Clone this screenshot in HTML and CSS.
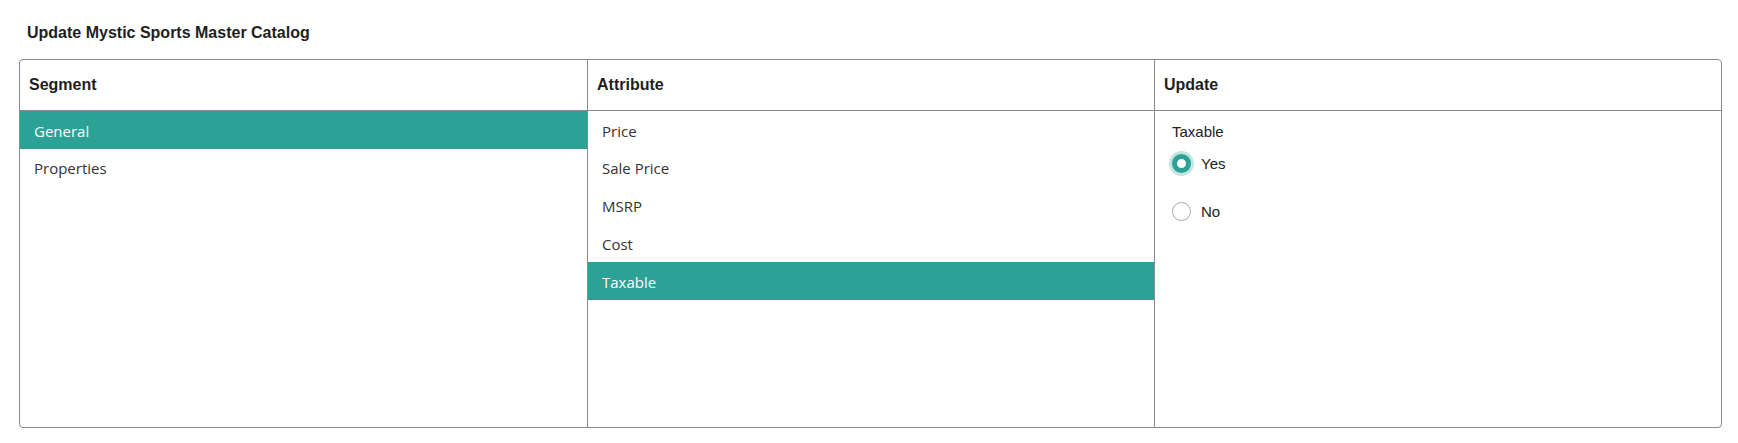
FILE: index.html
```html
<!DOCTYPE html>
<html lang="en">
<head>
<meta charset="utf-8">
<title>Update Mystic Sports Master Catalog</title>
<link rel="stylesheet" href="styles.css">
</head>
<body>
<div class="page">
  <h1 class="title">Update Mystic Sports Master Catalog</h1>
  <div class="panel">
    <section class="col">
      <div class="col-head">Segment</div>
      <ul class="list">
        <li class="item selected">General</li>
        <li class="item">Properties</li>
      </ul>
    </section>
    <section class="col">
      <div class="col-head">Attribute</div>
      <ul class="list">
        <li class="item">Price</li>
        <li class="item">Sale Price</li>
        <li class="item">MSRP</li>
        <li class="item">Cost</li>
        <li class="item selected">Taxable</li>
      </ul>
    </section>
    <section class="col">
      <div class="col-head">Update</div>
      <div class="update">
        <div class="field-label">Taxable</div>
        <label class="option">
          <input class="radio" type="radio" name="taxable" checked>
          <span>Yes</span>
        </label>
        <label class="option">
          <input class="radio" type="radio" name="taxable">
          <span>No</span>
        </label>
      </div>
    </section>
  </div>
</div>
</body>
</html>
```
FILE: styles.css
```css
html, body {
  margin: 0;
  padding: 0;
  background: #ffffff;
}

.page {
  padding: 24px 16px 0 19px;
  font-family: "Liberation Sans", Arial, sans-serif;
  color: #222222;
}

.title {
  margin: 0 0 0 8px;
  font-size: 16px;
  line-height: 18px;
  font-weight: bold;
  color: #1e1e1e;
}

.panel {
  box-sizing: border-box;
  margin-top: 17px;
  width: 1703px;
  height: 369px;
  border: 1px solid #8a8a8a;
  border-radius: 4px;
  display: grid;
  grid-template-columns: 1fr 1fr 1fr;
  overflow: hidden;
}

.col {
  display: flex;
  flex-direction: column;
  min-width: 0;
}

.col + .col {
  border-left: 1px solid #8a8a8a;
}

.col-head {
  box-sizing: border-box;
  height: 51px;
  border-bottom: 1px solid #8a8a8a;
  display: flex;
  align-items: center;
  padding: 0 0 1px 9px;
  font-size: 16px;
  font-weight: bold;
  color: #1e1e1e;
}

.list {
  list-style: none;
  margin: 0;
  padding: 0;
}

.item {
  padding: 9.5px 14px 6.5px 14px;
  line-height: 21.75px;
  font-family: "Open Sans", "Noto Sans", sans-serif;
  font-size: 15px;
  color: #333333;
}

.item.selected {
  background: #2ca195;
  color: #ffffff;
}

.update {
  display: flex;
  flex-direction: column;
  align-items: flex-start;
  padding: 12px 0 0 17px;
  font-size: 15px;
  color: #222222;
}

.field-label {
  line-height: 17px;
}

.option {
  display: flex;
  align-items: center;
  height: 26px;
  margin-top: 10px;
  line-height: 17px;
}

.option + .option {
  margin-top: 22px;
}

.radio {
  appearance: none;
  -webkit-appearance: none;
  box-sizing: border-box;
  width: 19px;
  height: 19px;
  margin: 0 10px 0 0;
  border: 1px solid #a8a8a8;
  border-radius: 50%;
  background: #ffffff;
}

.radio:checked {
  border: 5px solid #2ca195;
  box-shadow: 0 0 0 3px #c3e5e0;
}
```
